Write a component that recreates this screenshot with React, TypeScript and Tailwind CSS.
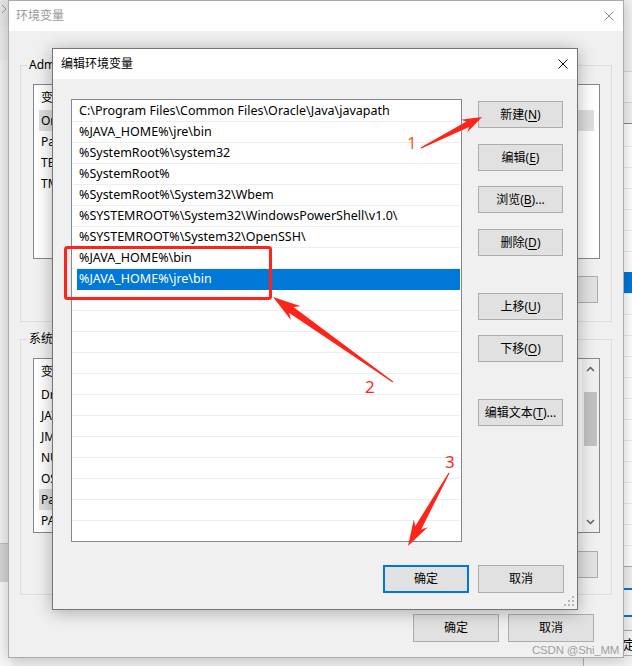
import React from "react";

const FONT = "font-['Noto_Sans','Noto_Sans_CJK_SC',sans-serif]";

function Btn({ children, className = "" }: { children: React.ReactNode; className?: string }) {
  return (
    <div
      className={`flex shrink-0 items-center justify-center border border-[#adadad] bg-[#e1e1e1] text-[12px] leading-none text-black ${className}`}
    >
      {children}
    </div>
  );
}

function U({ children }: { children: React.ReactNode }) {
  return <span className="underline underline-offset-[2px]">{children}</span>;
}

function CloseX({ color }: { color: string }) {
  return (
    <svg width="10" height="10" viewBox="0 0 10 10">
      <path d="M0.5 0.5 L9.5 9.5 M9.5 0.5 L0.5 9.5" stroke={color} strokeWidth="1" fill="none" />
    </svg>
  );
}

function arrowPoints(
  x1: number,
  y1: number,
  x2: number,
  y2: number,
  head: number,
  headW: number,
  shaftW: number
) {
  const dx = x2 - x1;
  const dy = y2 - y1;
  const L = Math.hypot(dx, dy);
  const ux = dx / L;
  const uy = dy / L;
  const px = -uy;
  const py = ux;
  const nx = x2 - ux * head;
  const ny = y2 - uy * head;
  const ix = nx + ux * head * 0.2;
  const iy = ny + uy * head * 0.2;
  const pts = [
    [x1 + px * 0.6, y1 + py * 0.6],
    [ix + px * shaftW, iy + py * shaftW],
    [nx + px * headW, ny + py * headW],
    [x2, y2],
    [nx - px * headW, ny - py * headW],
    [ix - px * shaftW, iy - py * shaftW],
    [x1 - px * 0.6, y1 - py * 0.6],
  ];
  return pts.map((p) => `${p[0].toFixed(1)},${p[1].toFixed(1)}`).join(" ");
}

const userVars: [string, string][] = [
  ["OneDrive", "C:\\Users\\Administrator\\OneDrive"],
  ["Path", "C:\\Users\\Administrator\\AppData\\Local\\Microsoft\\WindowsApps;"],
  ["TEMP", "%USERPROFILE%\\AppData\\Local\\Temp"],
  ["TMP", "%USERPROFILE%\\AppData\\Local\\Temp"],
];

const sysVars: [string, string][] = [
  ["DriverData", "C:\\Windows\\System32\\Drivers\\DriverData"],
  ["JAVA_HOME", "C:\\Program Files\\Java\\jdk1.8.0_301"],
  ["JMETER_HOME", "D:\\apache-jmeter-5.4.1"],
  ["NUMBER_OF_PROCESSORS", "8"],
  ["OS", "Windows_NT"],
  ["Path", "C:\\Program Files\\Common Files\\Oracle\\Java\\javapath;..."],
  ["PATHEXT", ".COM;.EXE;.BAT;.CMD;.VBS;.VBE;.JS"],
];

const paths = [
  "C:\\Program Files\\Common Files\\Oracle\\Java\\javapath",
  "%JAVA_HOME%\\jre\\bin",
  "%SystemRoot%\\system32",
  "%SystemRoot%",
  "%SystemRoot%\\System32\\Wbem",
  "%SYSTEMROOT%\\System32\\WindowsPowerShell\\v1.0\\",
  "%SYSTEMROOT%\\System32\\OpenSSH\\",
  "%JAVA_HOME%\\bin",
  "%JAVA_HOME%\\jre\\bin",
];

function VarList({ rows, selected, scroll }: { rows: [string, string][]; selected: number; scroll?: boolean }) {
  return (
    <div className="flex h-[175px] w-full min-w-0 overflow-hidden border border-[#828790] bg-white text-[12px] text-black">
      <div className="flex min-w-0 flex-1 flex-col overflow-hidden">
        <div className="flex h-[25px] shrink-0 items-center pl-[7px]">
          <span className="w-[170px]">变量</span>
          <span>值</span>
        </div>
        {rows.map(([k, v], i) => (
          <div
            key={k}
            className={`mx-[5px] flex h-[21px] shrink-0 items-center overflow-hidden whitespace-nowrap pl-[2px] ${
              i === selected ? "bg-[#dedede]" : ""
            }`}
          >
            <span className="w-[163px] shrink-0">{k}</span>
            <span className="truncate">{v}</span>
          </div>
        ))}
      </div>
      {scroll && (
        <div className="flex w-[17px] shrink-0 flex-col bg-[#f0f0f0]">
          <div className="flex h-[20px] items-center justify-center">
            <svg width="9" height="6" viewBox="0 0 9 6">
              <path d="M1 5 L4.5 1.5 L8 5" stroke="#606060" strokeWidth="1.5" fill="none" />
            </svg>
          </div>
          <div className="mx-[2px] mt-[13px] h-[54px] bg-[#c1c1c1]" />
          <div className="flex-1" />
          <div className="flex h-[20px] items-center justify-center">
            <svg width="9" height="6" viewBox="0 0 9 6">
              <path d="M1 1 L4.5 4.5 L8 1" stroke="#606060" strokeWidth="1.5" fill="none" />
            </svg>
          </div>
        </div>
      )}
    </div>
  );
}

function EnvWindow() {
  return (
    <div className="absolute left-[8px] top-0 flex h-[658px] w-[616px] flex-col border border-[#aaaaaa] bg-[#f0f0f0] shadow-[0_2px_14px_rgba(0,0,0,0.22)]">
      <div className="flex h-[30px] shrink-0 items-center justify-between bg-white pl-[7px] pr-[9px]">
        <span className="text-[12px] text-[#999999]">环境变量</span>
        <CloseX color="#8a8a8a" />
      </div>
      <div className="flex min-w-0 flex-1 flex-col px-[11px] pt-[26px] text-[12px] text-black">
        <fieldset className="min-w-0 border border-[#dcdcdc]">
          <legend className="ml-[6px] px-[2px] text-[12px] leading-[16px]">Administrator 的用户变量(<U>U</U>)</legend>
          <div className="pb-[18px] pl-[12px] pr-[11px] pt-[11px]">
            <VarList rows={userVars} selected={0} />
            <div className="mt-[17px] flex justify-end gap-[9px] pr-[2px]">
              <Btn className="h-[27px] w-[86px]">新建(<U>N</U>)...</Btn>
              <Btn className="h-[27px] w-[86px]">编辑(<U>E</U>)...</Btn>
              <Btn className="h-[27px] w-[86px]">删除(<U>D</U>)</Btn>
            </div>
          </div>
        </fieldset>
        <fieldset className="mt-[9px] min-w-0 border border-[#dcdcdc]">
          <legend className="ml-[6px] px-[2px] text-[12px] leading-[16px]">系统变量(<U>S</U>)</legend>
          <div className="pb-[16px] pl-[12px] pr-[11px] pt-[11px]">
            <VarList rows={sysVars} selected={5} scroll />
            <div className="mt-[18px] flex justify-end gap-[9px] pr-[2px]">
              <Btn className="h-[27px] w-[86px]">新建(<U>W</U>)...</Btn>
              <Btn className="h-[27px] w-[86px]">编辑(<U>I</U>)...</Btn>
              <Btn className="h-[27px] w-[86px]">删除(<U>L</U>)</Btn>
            </div>
          </div>
        </fieldset>
        <div className="mt-[19px] flex justify-end gap-[9px] pr-[18px]">
          <Btn className="h-[28px] w-[86px]">确定</Btn>
          <Btn className="h-[28px] w-[86px]">取消</Btn>
        </div>
      </div>
    </div>
  );
}

function EditDialog() {
  const rows = Array.from({ length: 21 }, (_, i) => paths[i] ?? "");
  return (
    <div className="absolute left-[52px] top-[48px] flex h-[562px] w-[526px] flex-col border border-[#767676] bg-[#f0f0f0] shadow-[0_2px_16px_rgba(0,0,0,0.3)]">
      <div className="flex h-[30px] shrink-0 items-center justify-between bg-white pl-[8px] pr-[9px]">
        <span className="text-[12px] text-black">编辑环境变量</span>
        <CloseX color="#111111" />
      </div>
      <div className="flex pl-[18px] pr-[14px] pt-[20px]">
        <div className="h-[443px] w-[391px] overflow-hidden border border-[#828790] bg-white pt-[1px] text-[12.5px] text-black">
          {rows.map((p, i) =>
            i === 8 ? (
              <div key={i} className="h-[21px] pr-[1px]">
                <div className="ml-[5px] flex h-[21px] items-center bg-[#0078d7] pl-[2px] text-white">{p}</div>
              </div>
            ) : (
              <div
                key={i}
                className="mr-[1px] flex h-[21px] items-center whitespace-nowrap border-b border-[#eeeeee] pl-[7px]"
              >
                {p}
              </div>
            )
          )}
        </div>
        <div className="ml-[16px] flex w-[85px] flex-col">
          <Btn className="mt-[2px] h-[27px]">新建(<U>N</U>)</Btn>
          <Btn className="mt-[16px] h-[27px]">编辑(<U>E</U>)</Btn>
          <Btn className="mt-[15px] h-[27px]">浏览(<U>B</U>)...</Btn>
          <Btn className="mt-[16px] h-[27px]">删除(<U>D</U>)</Btn>
          <Btn className="mt-[37px] h-[27px]">上移(<U>U</U>)</Btn>
          <Btn className="mt-[15px] h-[27px]">下移(<U>O</U>)</Btn>
          <Btn className="mt-[37px] h-[27px]">编辑文本(<U>T</U>)...</Btn>
        </div>
      </div>
      <div className="mt-[23px] flex justify-end gap-[9px] pr-[13px]">
        <div className="flex h-[28px] w-[86px] items-center justify-center border-2 border-[#0078d7] bg-[#e1e1e1] text-[12px] text-black">
          确定
        </div>
        <Btn className="h-[28px] w-[86px]">取消</Btn>
      </div>
      <svg className="absolute bottom-[3px] right-[3px]" width="10" height="10" viewBox="0 0 10 10">
        <rect x="8" y="0" width="2" height="2" fill="#b8b8b8" />
        <rect x="4" y="4" width="2" height="2" fill="#b8b8b8" />
        <rect x="8" y="4" width="2" height="2" fill="#b8b8b8" />
        <rect x="0" y="8" width="2" height="2" fill="#b8b8b8" />
        <rect x="4" y="8" width="2" height="2" fill="#b8b8b8" />
        <rect x="8" y="8" width="2" height="2" fill="#b8b8b8" />
      </svg>
    </div>
  );
}

function LeftStrip() {
  return (
    <div className="absolute left-0 top-0 flex h-[666px] w-[12px] flex-col">
      <div className="flex h-[26px] items-start bg-[#e6e6e6] pl-[1px] pt-[4px]">
        <svg width="6" height="10" viewBox="0 0 6 10">
          <path d="M1 1 L5 5 L1 9" stroke="#9a9a9a" strokeWidth="1" fill="none" />
        </svg>
      </div>
      <div className="h-[34px] bg-[#e9e9e9]" />
      <div className="h-[483px] bg-[#f0f0f0]" />
      <div className="h-[39px] border-t border-[#bdbdbd] bg-[#d4d4d4]" />
      <div className="flex-1 bg-[#f7f7f7]" />
    </div>
  );
}

function RightStrip() {
  const rowsA = Array.from({ length: 21 });
  return (
    <div className="absolute left-[618px] top-0 flex h-[666px] w-[14px] flex-col bg-[#f0f0f0]">
      <div className="h-[72px] border-b border-[#d5d5d5]" />
      <div className="h-[31px] border-b border-[#d5d5d5] bg-[#f5f5f5]" />
      <div className="h-[20px]" />
      <div className="flex h-[443px] flex-col overflow-hidden border-l border-t border-[#828790] bg-white">
        <div className="h-[22px] shrink-0" />
        {rowsA.map((_, i) => (
          <div
            key={i}
            className={`h-[21px] shrink-0 ${i === 6 ? "bg-[#0078d7]" : "border-t border-[#ececec]"}`}
          />
        ))}
      </div>
      <div className="h-[22px] border-t border-[#aaaaaa]" />
      <div className="h-[2px] bg-[#0078d7]" />
      <div className="h-[25px] bg-[#f8f8f8]" />
      <div className="h-[2px] bg-[#0078d7]" />
      <div className="h-[14px] border-b border-[#aaaaaa] bg-[#f4f4f4]" />
      <div className="flex h-[26px] items-center overflow-hidden whitespace-nowrap bg-[#f7f7f7] pl-[5px] text-[13px] leading-none text-black">
        定
      </div>
      <div className="flex-1 bg-[#f0f0f0]" />
    </div>
  );
}

function Annotations() {
  const red = "#ff2419";
  return (
    <svg className="pointer-events-none absolute left-0 top-0" width="632" height="666" viewBox="0 0 632 666">
      <rect x="65.5" y="247.5" width="205" height="51" rx="2" fill="none" stroke={red} strokeWidth="3" />
      <polygon points={arrowPoints(421, 148, 482, 117, 20, 7, 3)} fill={red} />
      <polygon points={arrowPoints(393, 382, 273, 297, 28, 8.5, 3.6)} fill={red} />
      <polygon points={arrowPoints(449, 473, 408, 546, 26, 8, 3.4)} fill={red} />
      <text x="407" y="149" fontSize="17" fill="#ff5a1f" fontFamily="Noto Sans, sans-serif">
        1
      </text>
      <text x="365" y="393" fontSize="17" fill={red} fontFamily="Noto Sans, sans-serif">
        2
      </text>
      <text x="445" y="468" fontSize="17" fill={red} fontFamily="Noto Sans, sans-serif">
        3
      </text>
    </svg>
  );
}

export default function App() {
  return (
    <div className={`relative h-[666px] w-[632px] overflow-hidden bg-[#f0f0f0] ${FONT}`}>
      <LeftStrip />
      <RightStrip />
      <div className="absolute left-[583px] top-[655px] h-[20px] w-[60px] border-l border-t border-[#b0b0b0] bg-[#f3f3f3]" />
      <EnvWindow />
      <EditDialog />
      <Annotations />
      <div className="pointer-events-none absolute left-[532px] top-[643px] whitespace-nowrap text-[11.5px] leading-[14px] tracking-[-0.2px] text-[rgba(130,130,130,0.75)] font-['Liberation_Sans',sans-serif]">
        CSDN @Shi_MM
      </div>
    </div>
  );
}
